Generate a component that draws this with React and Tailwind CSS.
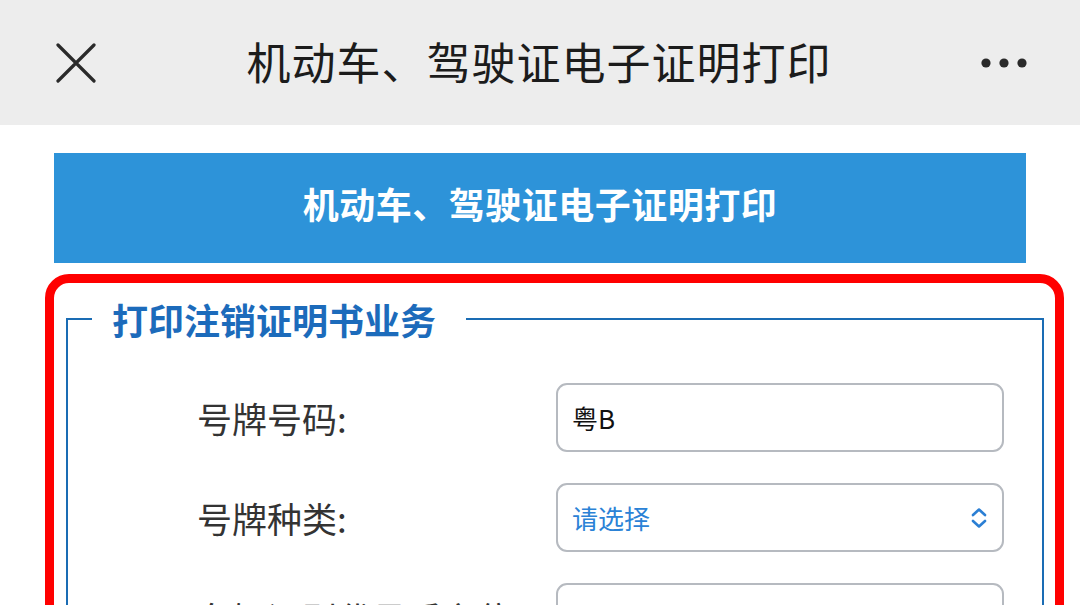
import React from 'react';

const cjk = { fontFamily: '"Noto Sans CJK SC", "Noto Sans", sans-serif' };

const fields = [
  { label: '号牌号码:', value: '粤B', type: 'input' },
  { label: '号牌种类:', value: '请选择', type: 'select' },
  { label: '车辆识别代号后六位:', value: '', type: 'input' },
];

const CloseIcon = () => (
  <svg width="40" height="40" viewBox="0 0 40 40" fill="none">
    <path d="M2 2 L38 38 M38 2 L2 38" stroke="#2a2a2a" strokeWidth="3.2" strokeLinecap="round" />
  </svg>
);

const MoreIcon = () => (
  <svg width="48" height="12" viewBox="0 0 48 12">
    <circle cx="6" cy="6" r="4.6" fill="#2a2a2a" />
    <circle cx="24" cy="6" r="4.6" fill="#2a2a2a" />
    <circle cx="42" cy="6" r="4.6" fill="#2a2a2a" />
  </svg>
);

const UpDownIcon = () => (
  <svg width="18" height="22" viewBox="0 0 18 22" fill="none">
    <path d="M3 8 L9 2.5 L15 8 M3 14 L9 19.5 L15 14" stroke="#2b7fd4" strokeWidth="2.6" strokeLinecap="round" strokeLinejoin="round" />
  </svg>
);

const Field = ({ field }) => (
  <div className="flex items-center h-[69px]">
    <div className="w-[488px] shrink-0 pl-[129px] text-[35px] text-[#333] whitespace-nowrap leading-none">
      {field.label}
    </div>
    <div className="w-[448px] shrink-0 h-[69px] rounded-[11px] border-2 border-[#b6bac0] bg-white flex items-center justify-between pl-[14px] pr-[14px]">
      {field.type === 'select' ? (
        <>
          <span className="text-[26px] text-[#2b82d6]">{field.value}</span>
          <UpDownIcon />
        </>
      ) : (
        <span className="text-[26px] text-[#111]">{field.value}</span>
      )}
    </div>
  </div>
);

const App = () => {
  return (
    <div className="w-[1080px] h-[605px] overflow-hidden bg-white" style={cjk}>
      <div className="h-[125px] bg-[#ededed] flex items-center justify-between pl-[56px] pr-[52px]">
        <CloseIcon />
        <h1 className="text-[44px] text-[#1c1c1c] leading-none tracking-[1px] ml-[2px] pb-[4px]">机动车、驾驶证电子证明打印</h1>
        <MoreIcon />
      </div>

      <div className="pt-[28px]">
        <div className="mx-[54px] h-[110px] bg-[#2d93d9] flex items-center justify-center pb-[10px]">
          <span className="text-[36px] font-bold text-white tracking-[0.5px] leading-none">机动车、驾驶证电子证明打印</span>
        </div>

        <div className="mt-[11px] ml-[45px] w-[1019px] h-[400px] border-[9px] border-[#ff0000] rounded-[24px] pl-[12px] pr-[11px] pt-[16px]">
          <fieldset className="border-2 border-[#1a6cb4] h-[400px]">
            <legend className="ml-[24px] pl-[20px] pr-[30px] text-[36px] font-bold text-[#1c6bbb] leading-[40px]">
              打印注销证明书业务
            </legend>
            <div className="pt-[44px] flex flex-col gap-[31px]">
              {fields.map((f) => (
                <Field key={f.label} field={f} />
              ))}
            </div>
          </fieldset>
        </div>
      </div>
    </div>
  );
};

export default App;
